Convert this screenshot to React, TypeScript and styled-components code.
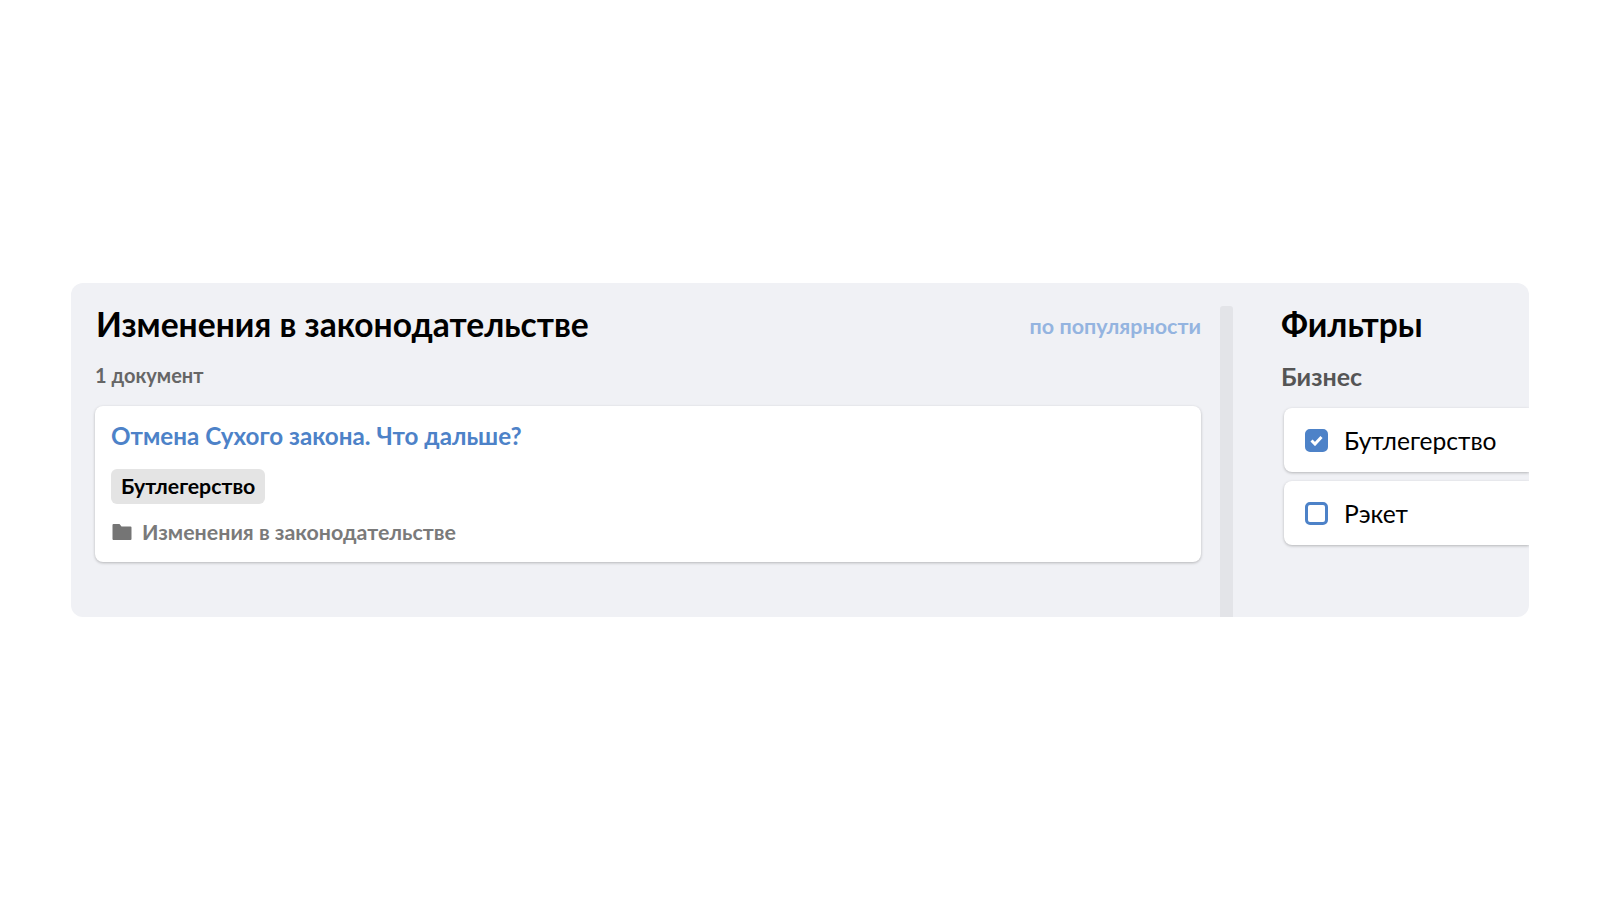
import React from 'react';
import styled, { createGlobalStyle } from 'styled-components';

const blue = '#4d82c8';

const GlobalStyle = createGlobalStyle`
  body {
    margin: 0;
    background: #fff;
    font-family: Lato, "Noto Sans", sans-serif;
  }
`;

const Page = styled.div`
  min-height: 100vh;
  display: flex;
  align-items: center;
  justify-content: center;
`;

const Panel = styled.section`
  width: 1458px;
  height: 334px;
  box-sizing: border-box;
  padding: 22px 0 0 24px;
  display: flex;
  background: #f0f1f5;
  border-radius: 12px;
  overflow: hidden;
`;

const Results = styled.div`
  width: 1106px;
  flex-shrink: 0;
`;

const Header = styled.div`
  display: flex;
  align-items: center;
  justify-content: space-between;
  height: 38px;
  padding-left: 1px;
`;

const Title = styled.h2`
  margin: 0;
  font-size: 33.6px;
  line-height: 38px;
  font-weight: 700;
  color: #000;
`;

const Sort = styled.a`
  margin-top: 4px;
  font-size: 21.5px;
  font-weight: 700;
  color: #94b4e0;
`;

const Count = styled.div`
  margin-top: 20px;
  font-size: 20px;
  line-height: 24px;
  font-weight: 700;
  color: #666;
`;

const Card = styled.article`
  margin-top: 19px;
  height: 156px;
  box-sizing: border-box;
  padding: 16px;
  background: #fff;
  border-radius: 8px;
  box-shadow: 0 1px 3px rgba(0, 0, 0, 0.25);
`;

const DocLink = styled.a`
  display: block;
  font-size: 24.2px;
  line-height: 28px;
  font-weight: 700;
  color: ${blue};
`;

const Tag = styled.span`
  display: inline-block;
  margin-top: 19px;
  padding: 0 10px;
  height: 35px;
  line-height: 35px;
  font-size: 21.3px;
  font-weight: 700;
  color: #000;
  background: #e4e4e4;
  border-radius: 6px;
`;

const Category = styled.div`
  display: flex;
  align-items: center;
  gap: 10px;
  margin-top: 16px;
  padding-left: 1px;
  font-size: 21.4px;
  line-height: 24px;
  font-weight: 700;
  color: #7a7a7a;
`;

const Scrollbar = styled.div`
  width: 13px;
  flex-shrink: 0;
  margin: 1px 0 0 19px;
  background: #e3e4e8;
  border-radius: 3px 3px 0 0;
`;

const Filters = styled.aside`
  flex: 1;
  margin-left: 48px;
  min-width: 0;
`;

const Section = styled.div`
  margin-top: 19px;
  font-size: 25px;
  line-height: 28px;
  font-weight: 700;
  color: #555;
`;

const Options = styled.div`
  display: flex;
  flex-direction: column;
  gap: 9px;
  margin: 18px 0 0 3px;
`;

const Option = styled.label`
  display: flex;
  align-items: center;
  gap: 16px;
  height: 64px;
  padding-left: 21px;
  background: #fff;
  border-radius: 8px 0 0 8px;
  box-shadow: 0 1px 3px rgba(0, 0, 0, 0.25);
  font-size: 24.6px;
  color: #000;
`;

const Box = styled.span<{ $checked?: boolean }>`
  width: 23px;
  height: 23px;
  box-sizing: border-box;
  display: flex;
  align-items: center;
  justify-content: center;
  border: 3px solid ${blue};
  border-radius: 5px;
  background: ${p => (p.$checked ? blue : '#fff')};
`;

const FolderIcon = () => (
  <svg width="20" height="18" viewBox="0 0 20 18">
    <path
      d="M1.5 1h6l2 2.5h9a1 1 0 0 1 1 1V16a1 1 0 0 1-1 1h-17a1 1 0 0 1-1-1V2a1 1 0 0 1 1-1z"
      fill="#757575"
    />
  </svg>
);

const CheckIcon = () => (
  <svg width="13" height="11" viewBox="0 0 13 11">
    <path d="M1.5 5.5l3.5 3.5 6.5-7" fill="none" stroke="#fff" strokeWidth="3" />
  </svg>
);

export default function App() {
  return (
    <Page>
      <GlobalStyle />
      <Panel>
        <Results>
          <Header>
            <Title>Изменения в законодательстве</Title>
            <Sort>по популярности</Sort>
          </Header>
          <Count>1 документ</Count>
          <Card>
            <DocLink>Отмена Сухого закона. Что дальше?</DocLink>
            <Tag>Бутлегерство</Tag>
            <Category>
              <FolderIcon />
              Изменения в законодательстве
            </Category>
          </Card>
        </Results>
        <Scrollbar />
        <Filters>
          <Title>Фильтры</Title>
          <Section>Бизнес</Section>
          <Options>
            <Option>
              <Box $checked>
                <CheckIcon />
              </Box>
              Бутлегерство
            </Option>
            <Option>
              <Box />
              Рэкет
            </Option>
          </Options>
        </Filters>
      </Panel>
    </Page>
  );
}
